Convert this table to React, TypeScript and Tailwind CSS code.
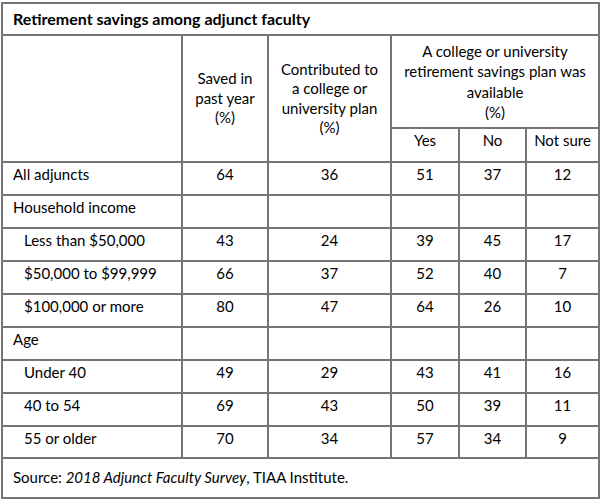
import React from "react";

const rows: { label: string; indent?: boolean; vals?: string[] }[] = [
  { label: "All adjuncts", vals: ["64", "36", "51", "37", "12"] },
  { label: "Household income" },
  { label: "Less than $50,000", indent: true, vals: ["43", "24", "39", "45", "17"] },
  { label: "$50,000 to $99,999", indent: true, vals: ["66", "37", "52", "40", "7"] },
  { label: "$100,000 or more", indent: true, vals: ["80", "47", "64", "26", "10"] },
  { label: "Age" },
  { label: "Under 40", indent: true, vals: ["49", "29", "43", "41", "16"] },
  { label: "40 to 54", indent: true, vals: ["69", "43", "50", "39", "11"] },
  { label: "55 or older", indent: true, vals: ["70", "34", "57", "34", "9"] },
];

const cell = "border-2 border-[#757575] p-0";

export default function App() {
  return (
    <div className="bg-white w-[600px] h-[502px] pt-[2px] pl-[1px] text-black font-['Lato',_'Liberation_Sans',_sans-serif] text-[15px] leading-[19.5px]">
      <table className="table-fixed border-collapse w-[599px]">
        <colgroup>
          <col className="w-[180px]" />
          <col className="w-[86px]" />
          <col className="w-[123px]" />
          <col className="w-[68px]" />
          <col className="w-[67px]" />
          <col className="w-[73px]" />
        </colgroup>
        <tbody>
          <tr className="h-[32px]">
            <td colSpan={6} className={`${cell} pl-[10px] align-middle font-bold text-[16px]`}>
              Retirement savings among adjunct faculty
            </td>
          </tr>
          <tr className="h-[93px]">
            <td rowSpan={2} className={cell}></td>
            <td rowSpan={2} className={`${cell} text-center align-middle`}>
              Saved in
              <br />
              past year
              <br />
              (%)
            </td>
            <td rowSpan={2} className={`${cell} text-center align-middle`}>
              Contributed to
              <br />a college or
              <br />
              university plan
              <br />
              (%)
            </td>
            <td colSpan={3} className={`${cell} text-center align-middle leading-[20.5px]`}>
              A college or university
              <br />
              retirement savings plan was
              <br />
              available
              <br />
              (%)
            </td>
          </tr>
          <tr className="h-[34px]">
            <td className={`${cell} text-center align-top pt-[2px]`}>Yes</td>
            <td className={`${cell} text-center align-top pt-[2px]`}>No</td>
            <td className={`${cell} text-center align-top pt-[2px]`}>Not sure</td>
          </tr>
          {rows.map((r, i) => (
            <tr key={i} className={i === rows.length - 1 ? "h-[32px]" : "h-[33px]"}>
              <td className={`${cell} align-top pt-[2px] ${r.indent ? "pl-[21px]" : "pl-[10px]"}`}>
                {r.label}
              </td>
              {[0, 1, 2, 3, 4].map((j) => (
                <td key={j} className={`${cell} text-center align-top pt-[2px]`}>
                  {r.vals ? r.vals[j] : ""}
                </td>
              ))}
            </tr>
          ))}
          <tr className="h-[40px]">
            <td colSpan={6} className={`${cell} pl-[10px] align-middle`}>
              Source: <i>2018 Adjunct Faculty Survey</i>, TIAA Institute.
            </td>
          </tr>
        </tbody>
      </table>
    </div>
  );
}
